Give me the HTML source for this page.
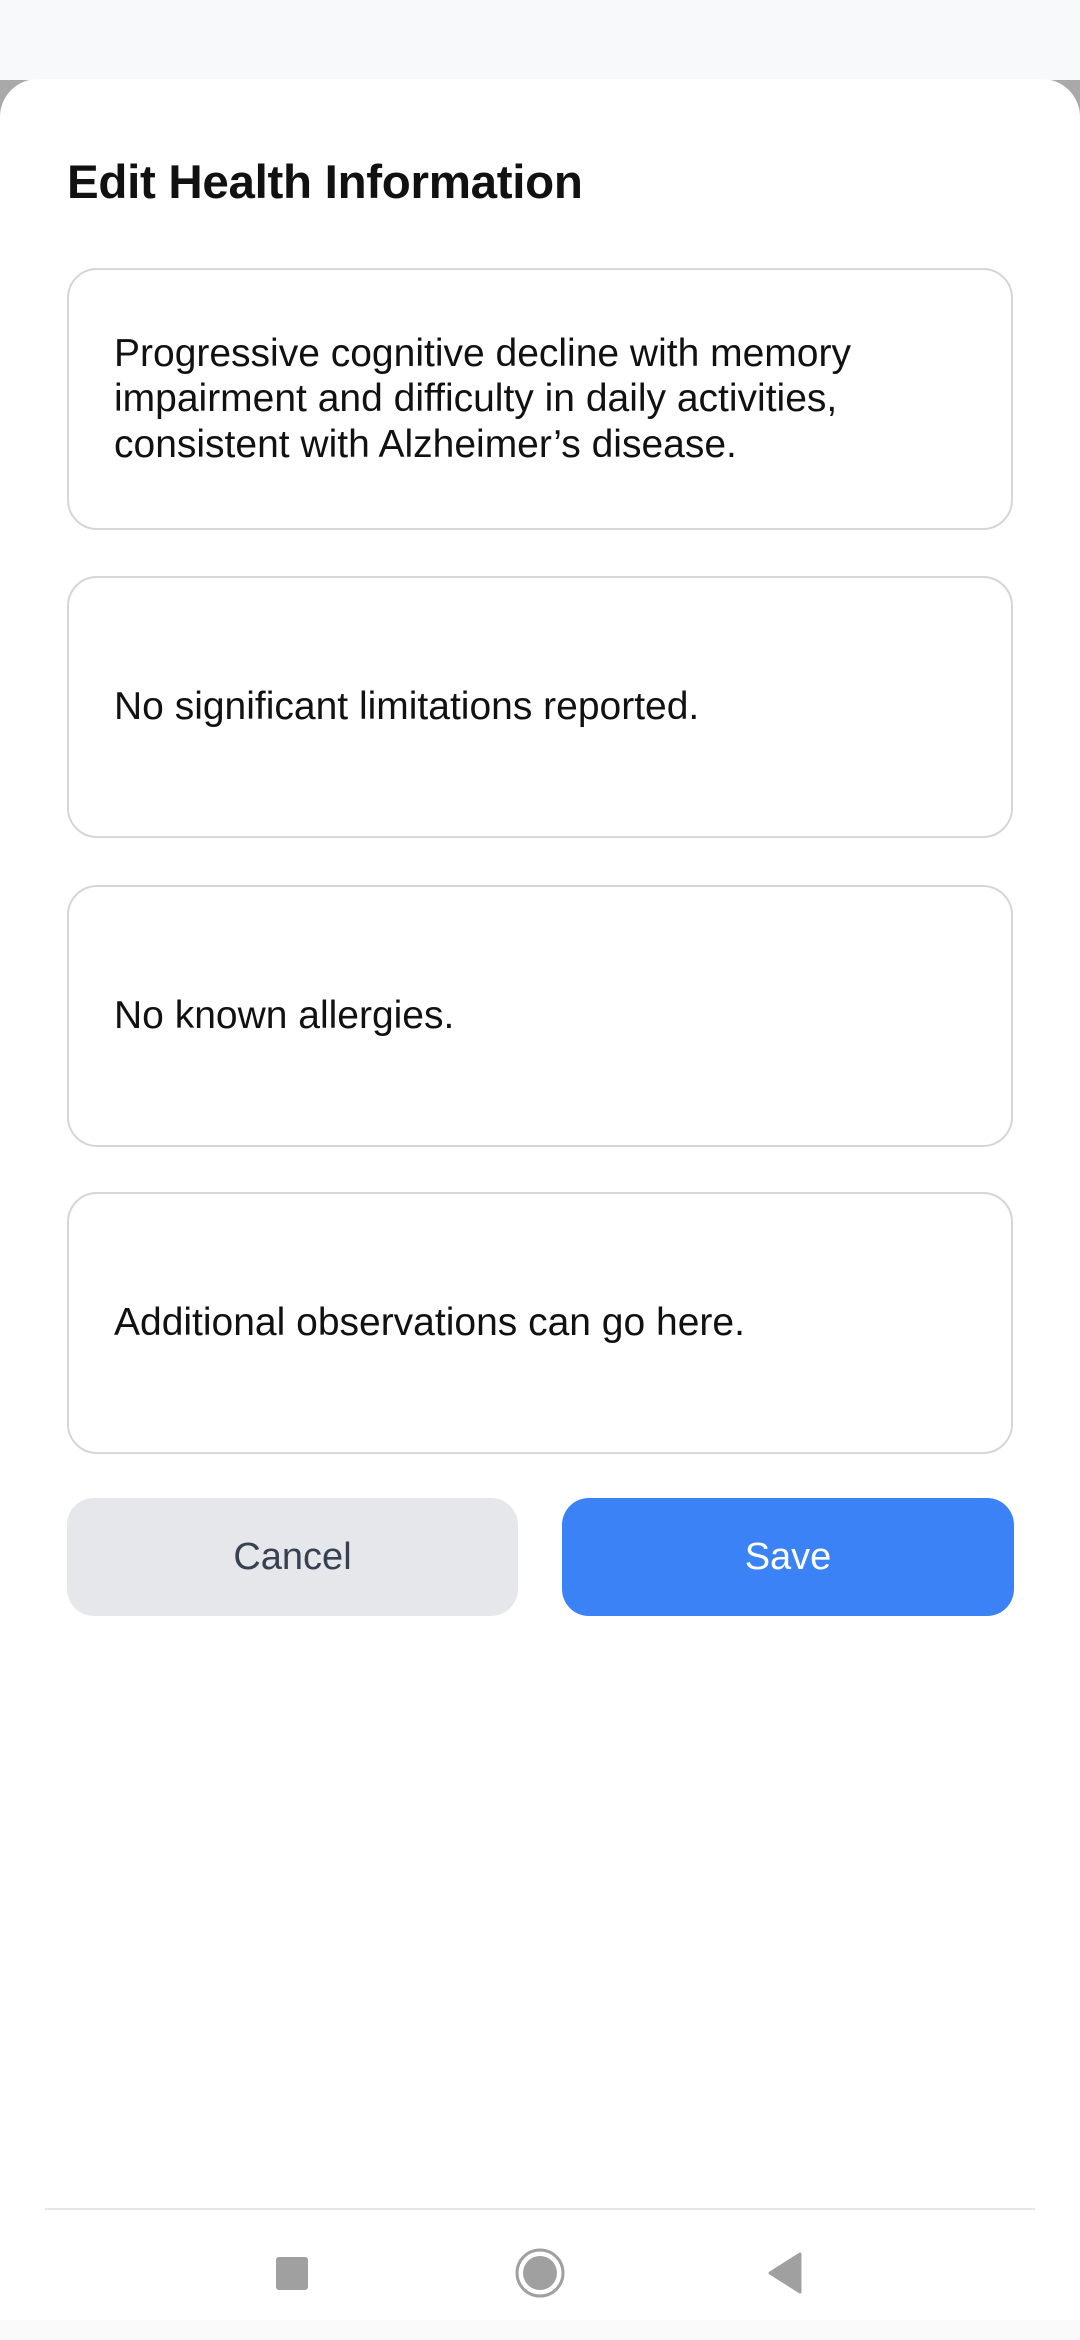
<!DOCTYPE html>
<html><head><meta charset="utf-8"><style>
html,body{margin:0;padding:0;}
body{width:1080px;height:2340px;position:relative;background:#a9a9a9;font-family:"Liberation Sans",Arial,sans-serif;overflow:hidden;}
.status{position:absolute;left:0;top:0;width:1080px;height:80px;background:#f8f9fb;}
.sheet{position:absolute;left:0;top:79px;width:1080px;height:2261px;background:#fff;border-radius:38px 38px 0 0;}
.title{position:absolute;left:67px;top:155px;font-size:47.5px;font-weight:bold;color:#111;letter-spacing:-0.3px;}
.box{position:absolute;left:67px;width:942px;height:258px;border:2px solid #d6d6d6;border-radius:30px;background:#fff;display:flex;align-items:center;}
.box div{padding-left:45px;font-size:39px;line-height:45.5px;color:#111;}
.btn{position:absolute;top:1498px;height:118px;border-radius:27px;display:flex;align-items:center;justify-content:center;font-size:38px;}
.divider{position:absolute;left:45px;top:2208px;width:990px;height:2px;background:#e6e6e6;}
.bottom{position:absolute;left:0;top:2320px;width:1080px;height:20px;background:#fafafa;}
</style></head><body>
<div class="status"></div>
<div class="sheet"></div>
<div class="title">Edit Health Information</div>
<div class="box" style="top:268px"><div>Progressive cognitive decline with memory<br>impairment and difficulty in daily activities,<br>consistent with Alzheimer’s disease.</div></div>
<div class="box" style="top:576px"><div>No significant limitations reported.</div></div>
<div class="box" style="top:885px"><div>No known allergies.</div></div>
<div class="box" style="top:1192px"><div>Additional observations can go here.</div></div>
<div class="btn" style="left:67px;width:451px;background:#e5e7eb;color:#374151;">Cancel</div>
<div class="btn" style="left:562px;width:452px;background:#3b82f6;color:#fff;">Save</div>
<div class="divider"></div>
<svg style="position:absolute;left:0;top:2240px" width="1080" height="70">
<rect x="276" y="17" width="32" height="33" rx="3" fill="#a0a0a0"/>
<circle cx="540" cy="33" r="23" fill="none" stroke="#a0a0a0" stroke-width="3"/>
<circle cx="540" cy="33" r="17" fill="#a0a0a0"/>
<path d="M800 14 L800 52 L770 33 Z" fill="#a0a0a0" stroke="#a0a0a0" stroke-width="3" stroke-linejoin="round"/>
</svg>
<div class="bottom"></div>
</body></html>
